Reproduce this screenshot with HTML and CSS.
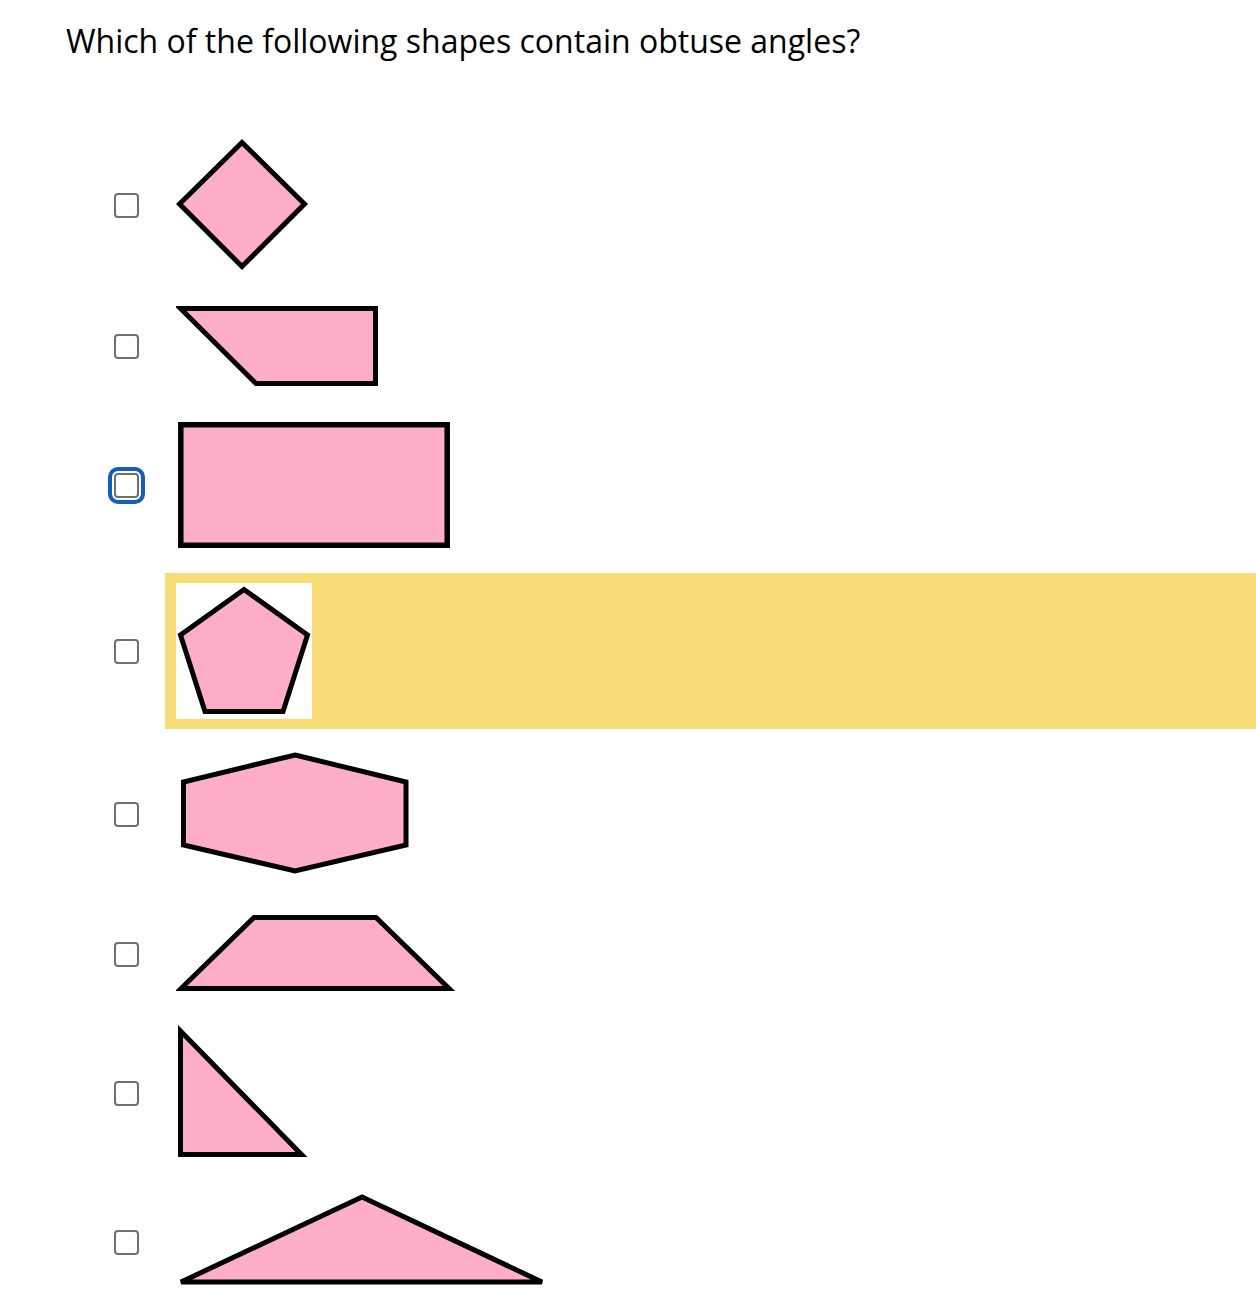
FILE: index.html
```html
<!DOCTYPE html>
<html lang="en">
<head>
<meta charset="utf-8">
<title>Obtuse angles</title>
<link rel="stylesheet" href="styles.css">
</head>
<body>
<div class="question">Which of the following shapes contain obtuse angles?</div>
<div class="options">
  <div class="row r1">
    <span class="check"></span>
    <div class="opt">
      <svg width="136" height="158" viewBox="0 0 136 158"><polygon class="shape" points="66,16.5 128.5,78 66,140.5 3.5,78"/></svg>
    </div>
  </div>
  <div class="row r2">
    <span class="check"></span>
    <div class="opt">
      <svg width="204" height="84" viewBox="0 0 204 84"><polygon class="shape" points="4.5,4.5 199.5,4.5 199.5,79.5 80,79.5"/></svg>
    </div>
  </div>
  <div class="row r3">
    <span class="check focused"></span>
    <div class="opt">
      <svg width="276" height="155" viewBox="0 0 276 155"><polygon class="shape thick" points="4.8,16.8 271.2,16.8 271.2,137.2 4.8,137.2"/></svg>
    </div>
  </div>
  <div class="row r4">
    <span class="check"></span>
    <div class="opt highlight">
      <svg class="white" width="136" height="136" viewBox="0 0 136 136"><polygon class="shape" points="68,6.5 131.5,52 107,128.5 29,128.5 4.5,52"/></svg>
    </div>
  </div>
  <div class="row r5">
    <span class="check"></span>
    <div class="opt">
      <svg width="240" height="150" viewBox="0 0 240 150"><polygon class="shape" points="119,16 230,43 230,106 119,132 7.5,106 7.5,43"/></svg>
    </div>
  </div>
  <div class="row r6">
    <span class="check"></span>
    <div class="opt">
      <svg width="280" height="90" viewBox="0 0 280 90"><polygon class="shape" points="78,8.5 200,8.5 273,79.5 5,79.5"/></svg>
    </div>
  </div>
  <div class="row r7">
    <span class="check"></span>
    <div class="opt">
      <svg width="132" height="148" viewBox="0 0 132 148"><polygon class="shape" points="4.5,12 125.5,135.5 4.5,135.5"/></svg>
    </div>
  </div>
  <div class="row r8">
    <span class="check"></span>
    <div class="opt">
      <svg width="372" height="110" viewBox="0 0 372 110"><polygon class="shape" points="186,10 366,95 5,95"/></svg>
    </div>
  </div>
</div>
</body>
</html>
```
FILE: styles.css
```css
html, body {
  margin: 0;
  padding: 0;
  background: #ffffff;
}
body {
  font-family: "Open Sans", "Liberation Sans", sans-serif;
  color: #000000;
}
.question {
  padding: 19px 0 0 66px;
  font-size: 32px;
  line-height: 44px;
  margin-bottom: 53px;
}
.options {
  display: flex;
  flex-direction: column;
}
.row {
  display: flex;
  align-items: center;
  padding-left: 114px;
  gap: 26px;
}
.check {
  flex: none;
  box-sizing: border-box;
  width: 25px;
  height: 25px;
  border: 2px solid #6f6f6f;
  border-radius: 4px;
  background: #ffffff;
}
.check.focused {
  outline: 4px solid #1160b8;
  outline-offset: 2px;
}
.opt {
  flex: 1;
  display: flex;
  padding: 10px 11px;
}
.opt svg {
  display: block;
}
.highlight {
  background: #f8dc78;
}
.white {
  background: #ffffff;
}
.shape {
  fill: #ffaec9;
  stroke: #000000;
  stroke-width: 5;
}
.shape.thick {
  stroke-width: 5.5;
}
```
